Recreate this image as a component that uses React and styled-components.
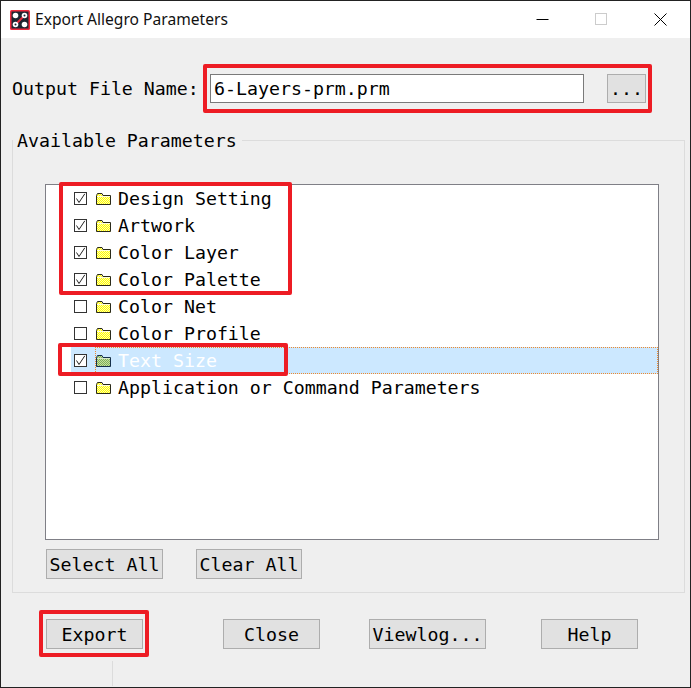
import React from "react";
import styled, {createGlobalStyle} from "styled-components";

const parameters = [
  {name: "Design Setting", checked: true},
  {name: "Artwork", checked: true},
  {name: "Color Layer", checked: true},
  {name: "Color Palette", checked: true},
  {name: "Color Net", checked: false},
  {name: "Color Profile", checked: false},
  {name: "Text Size", checked: true, selected: true},
  {name: "Application or Command Parameters", checked: false},
];

export default function App() {
  return (
    <Window>
      <GlobalStyle />
      <TitleBar>
        <AppIcon />
        <Title>Export Allegro Parameters</Title>
        <WindowButton>
          <svg width="13" height="13" viewBox="0 0 13 13">
            <path d="M0.5 6.5H12.5" stroke="#000" fill="none" />
          </svg>
        </WindowButton>
        <WindowButton>
          <svg width="13" height="13" viewBox="0 0 13 13">
            <rect x="0.5" y="0.5" width="11" height="11" stroke="#ccc" fill="none" />
          </svg>
        </WindowButton>
        <WindowButton>
          <svg width="13" height="13" viewBox="0 0 13 13">
            <path d="M0.5 0.5L12.5 12.5M12.5 0.5L0.5 12.5" stroke="#000" fill="none" />
          </svg>
        </WindowButton>
      </TitleBar>
      <Body>
        <OutputRow>
          <Label>Output File Name:</Label>
          <FileName>6-Layers-prm.prm</FileName>
          <Button $width={39} $height={29}>...</Button>
        </OutputRow>
        <Group>
          <Legend>Available Parameters</Legend>
          <ListBox>
            {parameters.map((p) => (
              <Row key={p.name} $selected={p.selected}>
                <CheckBox>
                  {p.checked && (
                    <svg width="11" height="11" viewBox="0 0 11 11">
                      <path d="M1.5 5.5L4 9.5L9.8 0.8" stroke="#222" strokeWidth="1" fill="none" />
                    </svg>
                  )}
                </CheckBox>
                <RowBody $selected={p.selected}>
                  <Folder selected={p.selected} />
                  <RowText $selected={p.selected}>{p.name}</RowText>
                </RowBody>
              </Row>
            ))}
          </ListBox>
          <ListActions>
            <Button $width={117} $height={30}>Select All</Button>
            <Button $width={106} $height={30}>Clear All</Button>
          </ListActions>
        </Group>
        <Footer>
          <Button $width={97} $height={30}>Export</Button>
          <Button $width={97} $height={30}>Close</Button>
          <Button $width={117} $height={30}>Viewlog...</Button>
          <Button $width={97} $height={30}>Help</Button>
        </Footer>
        <StatusTick />
      </Body>
      <Highlight $x={203} $y={64} $w={449} $h={49} />
      <Highlight $x={59} $y={182} $w={233} $h={113} />
      <Highlight $x={58} $y={343} $w={230} $h={33} />
      <Highlight $x={39} $y={610} $w={110} $h={47} />
    </Window>
  );
}

function AppIcon() {
  return (
    <svg width="20" height="20" viewBox="0 0 20 20">
      <rect x="0" y="0" width="20" height="20" rx="1.5" fill="#ee2a3c" />
      <rect x="1.5" y="1.5" width="17" height="17" fill="#1f2530" />
      <path d="M5 15L15 5" stroke="#ee2a3c" strokeWidth="1.8" />
      <circle cx="5.5" cy="5.5" r="2.8" fill="#fff" />
      <circle cx="14.5" cy="5.5" r="2.8" fill="#fff" />
      <circle cx="5.5" cy="14.5" r="2.8" fill="#fff" />
      <circle cx="14.5" cy="14.5" r="2.8" fill="#fff" />
      <circle cx="14.5" cy="5.5" r="1" fill="#1f2530" />
      <circle cx="5.5" cy="14.5" r="1" fill="#1f2530" />
    </svg>
  );
}

function Folder({selected}) {
  const id = selected ? "ditherSelected" : "dither";
  const dark = selected ? "#7fb05a" : "#ffff00";
  const light = selected ? "#c8e0a0" : "#fffbb0";
  return (
    <svg width="15" height="12" viewBox="0 0 15 12">
      <defs>
        <pattern id={id} width="2" height="2" patternUnits="userSpaceOnUse">
          <rect width="2" height="2" fill={light} />
          <rect x="1" width="1" height="1" fill={dark} />
          <rect y="1" width="1" height="1" fill={dark} />
        </pattern>
      </defs>
      <path d="M0.5 2.5L1.5 0.5H6L7 2.5H14.5V11.5H0.5Z" fill={`url(#${id})`} stroke={selected ? "#16304a" : "#2a2a1a"} strokeWidth="1" />
      <path d="M1 3.5H14" stroke={selected ? "#d8e8c8" : "#fffde0"} strokeWidth="1" />
    </svg>
  );
}

const GlobalStyle = createGlobalStyle`
  html, body {
    margin: 0;
    padding: 0;
    background: #efefef;
  }
`;

const Window = styled.div`
  position: relative;
  box-sizing: border-box;
  width: 691px;
  height: 688px;
  border: 1px solid #222;
  background: #efefef;
  overflow: hidden;
  font-family: "DejaVu Sans Mono", monospace;
  font-size: 18.25px;
  color: #000;
`;

const TitleBar = styled.div`
  display: flex;
  align-items: center;
  height: 37px;
  padding-left: 9px;
  background: #fff;
`;

const Title = styled.div`
  flex: 1;
  margin-left: 5px;
  padding-bottom: 2px;
  font-family: "Noto Sans", "Liberation Sans", sans-serif;
  font-size: 15.6px;
  color: #111;
`;

const WindowButton = styled.div`
  display: flex;
  align-items: center;
  justify-content: center;
  width: 59px;
  height: 37px;
`;

const Body = styled.div`
  position: relative;
  padding: 36px 5px 0 11px;
`;

const OutputRow = styled.div`
  display: flex;
  align-items: center;
  height: 29px;
`;

const Label = styled.div`
  width: 198px;
  white-space: pre;
`;

const FileName = styled.div`
  box-sizing: border-box;
  width: 374px;
  height: 29px;
  margin-right: 23px;
  padding-left: 3px;
  line-height: 27px;
  background: #fff;
  border: 1px solid #7a7a7a;
`;

const Group = styled.div`
  position: relative;
  box-sizing: border-box;
  width: 673px;
  height: 453px;
  margin-top: 37px;
  padding: 43px 25px 0 32px;
  border: 1px solid #dcdcdc;
`;

const Legend = styled.div`
  position: absolute;
  left: 0;
  top: -11px;
  padding: 0 5px 0 4px;
  line-height: 22px;
  background: #efefef;
`;

const ListBox = styled.div`
  box-sizing: border-box;
  width: 614px;
  height: 356px;
  background: #fff;
  border: 1px solid #7f7f86;
`;

const Row = styled.div`
  display: flex;
  align-items: center;
  height: 27px;
  margin-left: 25px;
  padding-left: 3px;
  background: ${(p) => (p.$selected ? "#cce8ff" : "transparent")};
`;

const CheckBox = styled.span`
  box-sizing: border-box;
  display: flex;
  align-items: center;
  justify-content: center;
  flex: none;
  width: 13px;
  height: 13px;
  margin-right: 8px;
  background: #fff;
  border: 1px solid #333;
`;

const RowBody = styled.div`
  display: flex;
  align-items: center;
  gap: 7px;
  flex: 1;
  align-self: stretch;
  padding-left: 1px;
  outline: ${(p) => (p.$selected ? "1px dotted #ef8a2e" : "none")};
  outline-offset: -1px;
`;

const RowText = styled.span`
  color: ${(p) => (p.$selected ? "#fff" : "#000")};
  white-space: pre;
`;

const ListActions = styled.div`
  display: flex;
  gap: 33px;
  margin-top: 9px;
  margin-left: 1px;
`;

const Button = styled.div`
  box-sizing: border-box;
  display: flex;
  align-items: center;
  justify-content: center;
  width: ${(p) => p.$width}px;
  height: ${(p) => p.$height}px;
  background: #e1e1e1;
  border: 1px solid #adadad;
  white-space: pre;
`;

const Footer = styled.div`
  display: flex;
  margin-top: 26px;
  margin-left: 34px;
  & > :nth-child(2) {
    margin-left: 80px;
  }
  & > :nth-child(3) {
    margin-left: 49px;
  }
  & > :nth-child(4) {
    margin-left: 55px;
  }
`;

const StatusTick = styled.div`
  width: 1px;
  height: 25px;
  margin: 12px 0 0 100px;
  background: #dcdcdc;
`;

const Highlight = styled.div`
  position: absolute;
  box-sizing: border-box;
  left: ${(p) => p.$x - 1}px;
  top: ${(p) => p.$y - 1}px;
  width: ${(p) => p.$w}px;
  height: ${(p) => p.$h}px;
  border: 4px solid #ed1c24;
  border-radius: 2px;
  pointer-events: none;
`;
